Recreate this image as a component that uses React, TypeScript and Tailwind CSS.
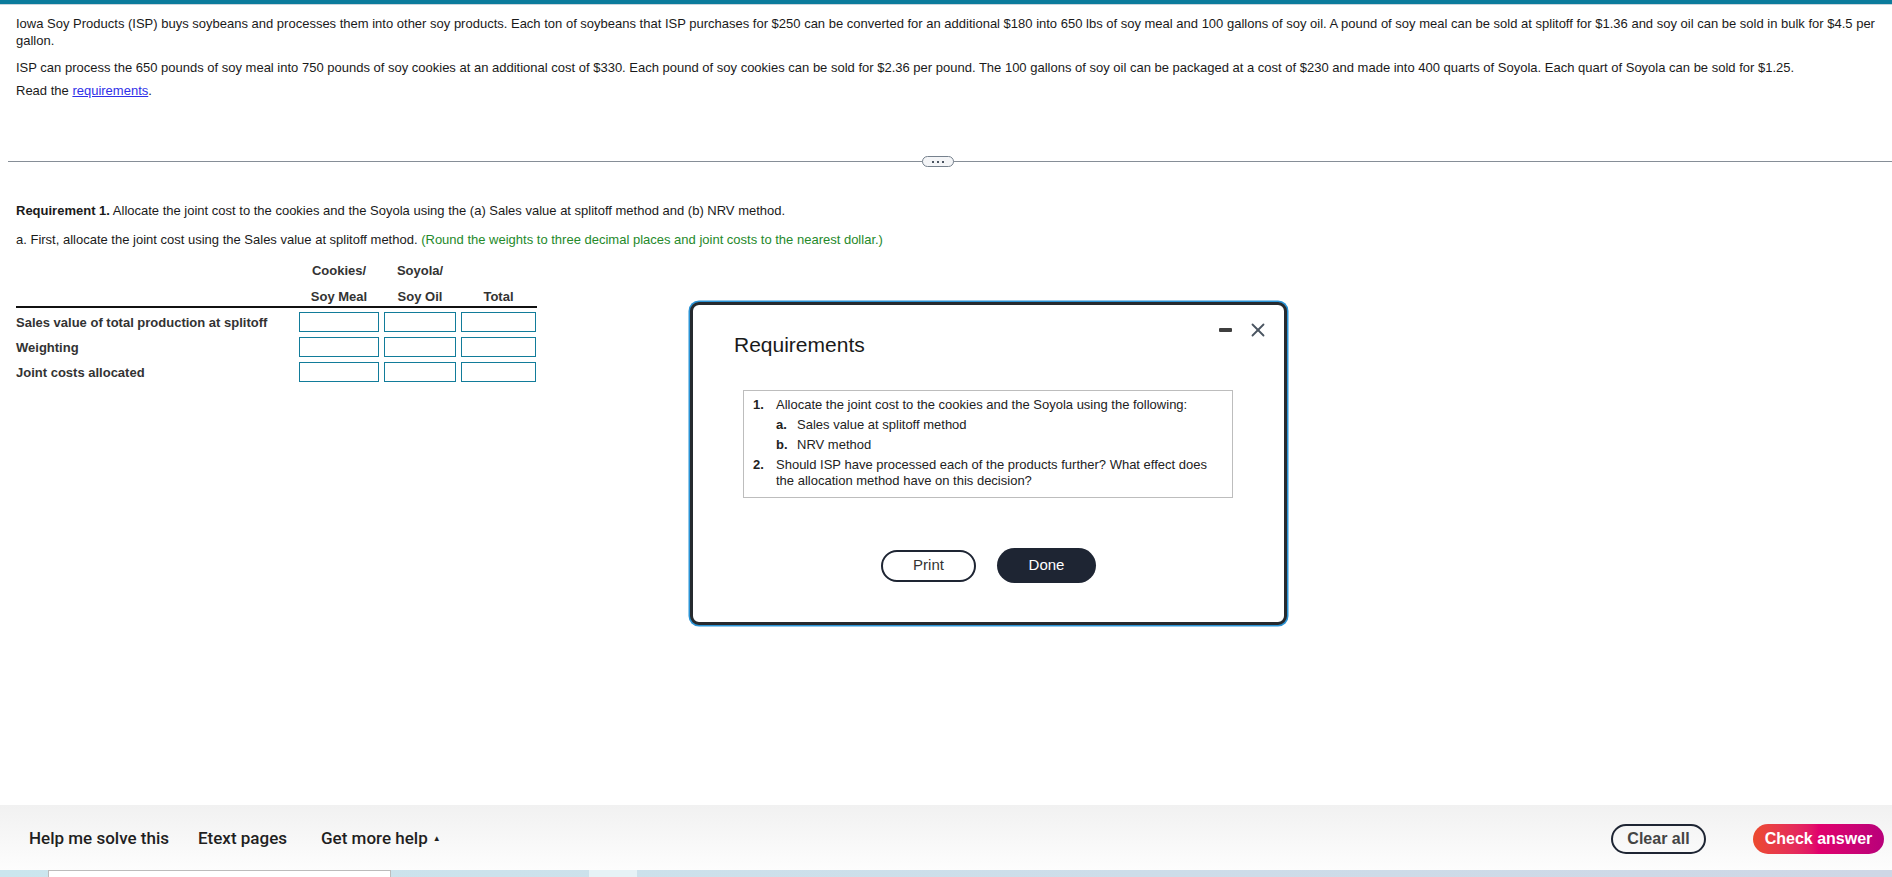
import { X } from "lucide-react";

const rows = ["Sales value of total production at splitoff", "Weighting", "Joint costs allocated"];

const Requirements = () => {
  return (
    <div className="absolute left-[690px] top-[302px] w-[597px] h-[323px] rounded-[9px] border-[3px] border-[#262a2e] bg-white shadow-[0_0_0_1.5px_#2a93d5]">
      <div className="absolute right-[15px] top-[14px] flex items-center gap-[15px]">
        <div className="w-[13px] h-[4px] rounded-[1px] bg-[#3f3f3f]" />
        <X className="w-[22px] h-[22px] text-[#4a5561]" strokeWidth={2} />
      </div>
      <div className="pl-[41px] pt-[28px] text-[21px] leading-[24px] text-[#1a1a1a]">Requirements</div>
      <div className="ml-[50px] mt-[33px] w-[490px] h-[108px] border border-[#bdbdbd] pl-[9px] pt-[6px] text-[13px] leading-[16px] text-[#222]">
        <div className="flex">
          <span className="w-[23px] font-bold">1.</span>
          <span>Allocate the joint cost to the cookies and the Soyola using the following:</span>
        </div>
        <div className="flex ml-[23px] mt-[4px]">
          <span className="w-[21px] font-bold">a.</span>
          <span>Sales value at splitoff method</span>
        </div>
        <div className="flex ml-[23px] mt-[4px]">
          <span className="w-[21px] font-bold">b.</span>
          <span>NRV method</span>
        </div>
        <div className="flex mt-[4px]">
          <span className="w-[23px] shrink-0 font-bold">2.</span>
          <span className="w-[440px]">Should ISP have processed each of the products further? What effect does the allocation method have on this decision?</span>
        </div>
      </div>
      <div className="mt-[50px] flex justify-center items-center gap-[21px]">
        <button className="w-[95px] h-[32px] rounded-full border-2 border-[#1e2533] bg-white text-[15px] text-[#333]">Print</button>
        <button className="w-[99px] h-[35px] rounded-full bg-[#1e2533] text-[15px] text-white">Done</button>
      </div>
    </div>
  );
};

export default function App() {
  return (
    <div className="relative h-[877px] w-full flex flex-col overflow-hidden bg-white font-['Liberation_Sans',Arial,sans-serif] text-[#1a1a1a]">
      <div className="h-[4px] bg-[#0b7b9c]" />
      <div className="h-px bg-[#c9d4dc]" />

      <div className="flex-1">
        <div className="pl-[16px] pr-[12px] pt-[10px] text-[13px] leading-[17px]">
          <p>
            Iowa Soy Products (ISP) buys soybeans and processes them into other soy products. Each ton of soybeans that ISP purchases for $250 can be converted for an additional $180 into 650 lbs of soy meal and 100 gallons of soy oil. A pound of soy meal can be sold at splitoff for $1.36 and soy oil can be sold in bulk for $4.5 per gallon.
          </p>
          <p className="mt-[10px]">
            ISP can process the 650 pounds of soy meal into 750 pounds of soy cookies at an additional cost of $330. Each pound of soy cookies can be sold for $2.36 per pound. The 100 gallons of soy oil can be packaged at a cost of $230 and made into 400 quarts of Soyola. Each quart of Soyola can be sold for $1.25.
          </p>
          <p className="mt-[6px]">
            Read the <span className="text-[#2f2fe8] underline">requirements</span>.
          </p>
        </div>

        <div className="relative ml-[8px] mt-[62px] h-px bg-[#868e97]">
          <div className="absolute left-[914px] -top-[5px] w-[32px] h-[11px] rounded-full border border-[#76818d] bg-[#f4f5f7] flex items-center justify-center gap-[3px]">
            <span className="w-[2px] h-[2px] bg-[#4b5561]" />
            <span className="w-[2px] h-[2px] bg-[#4b5561]" />
            <span className="w-[2px] h-[2px] bg-[#4b5561]" />
          </div>
        </div>

        <div className="pl-[16px] pt-[40px] text-[13px] leading-[17px]">
          <p>
            <span className="font-bold">Requirement 1.</span> Allocate the joint cost to the cookies and the Soyola using the (a) Sales value at splitoff method and (b) NRV method.
          </p>
          <p className="mt-[12px]">
            a. First, allocate the joint cost using the Sales value at splitoff method.{" "}
            <span className="text-[#25892a]">(Round the weights to three decimal places and joint costs to the nearest dollar.)</span>
          </p>

          <div className="mt-[14px] w-[521px] text-[#333]">
            <div className="flex border-b-2 border-[#111] font-bold leading-[18px]">
              <div className="w-[283px]" />
              <div className="w-[80px] text-center">
                <div>Cookies/</div>
                <div className="mt-[8px]">Soy Meal</div>
              </div>
              <div className="ml-[5px] w-[72px] text-center">
                <div>Soyola/</div>
                <div className="mt-[8px]">Soy Oil</div>
              </div>
              <div className="ml-[5px] w-[75px] text-center">
                <div>&nbsp;</div>
                <div className="mt-[8px]">Total</div>
              </div>
            </div>
            <div className="pt-[4px] flex flex-col gap-[5px]">
              {rows.map((label) => (
                <div key={label} className="flex items-center h-[20px]">
                  <div className="w-[283px] font-bold">{label}</div>
                  <div className="w-[80px] h-[20px] border border-[#127c9a]" />
                  <div className="ml-[5px] w-[72px] h-[20px] border border-[#127c9a]" />
                  <div className="ml-[5px] w-[75px] h-[20px] border border-[#127c9a]" />
                </div>
              ))}
            </div>
          </div>
        </div>
      </div>

      <Requirements />

      <div className="h-[65px] pt-[3px] flex items-center bg-gradient-to-b from-[#f1f1f1] to-[#fdfdfd]">
        <div className="pl-[29px] flex items-center text-[17px] font-medium text-[#1f1f1f] font-['Roboto','Liberation_Sans',sans-serif]">
          <span>Help me solve this</span>
          <span className="ml-[29px]">Etext pages</span>
          <span className="ml-[34px] flex items-center gap-[5px]">
            Get more help
            <span className="text-[8px] leading-none">▲</span>
          </span>
        </div>
        <div className="ml-auto pr-[8px] flex items-center gap-[47px]">
          <button className="w-[95px] h-[30px] rounded-full border-2 border-[#1e2533] text-[16px] font-bold text-[#444]">Clear all</button>
          <button className="w-[131px] h-[30px] rounded-full bg-gradient-to-r from-[#ec4a2c] via-[#e1006c] to-[#b8007a] text-[16px] font-bold text-white">Check answer</button>
        </div>
      </div>
      <div className="h-[7px] flex bg-gradient-to-r from-[#cbe6ee] to-[#ced7e6]">
        <div className="ml-[48px] w-[343px] bg-white border-t border-l border-r border-[#bcbcbc]" />
        <div className="ml-[198px] w-[48px] bg-[#e6f2f6]" />
      </div>
    </div>
  );
}
